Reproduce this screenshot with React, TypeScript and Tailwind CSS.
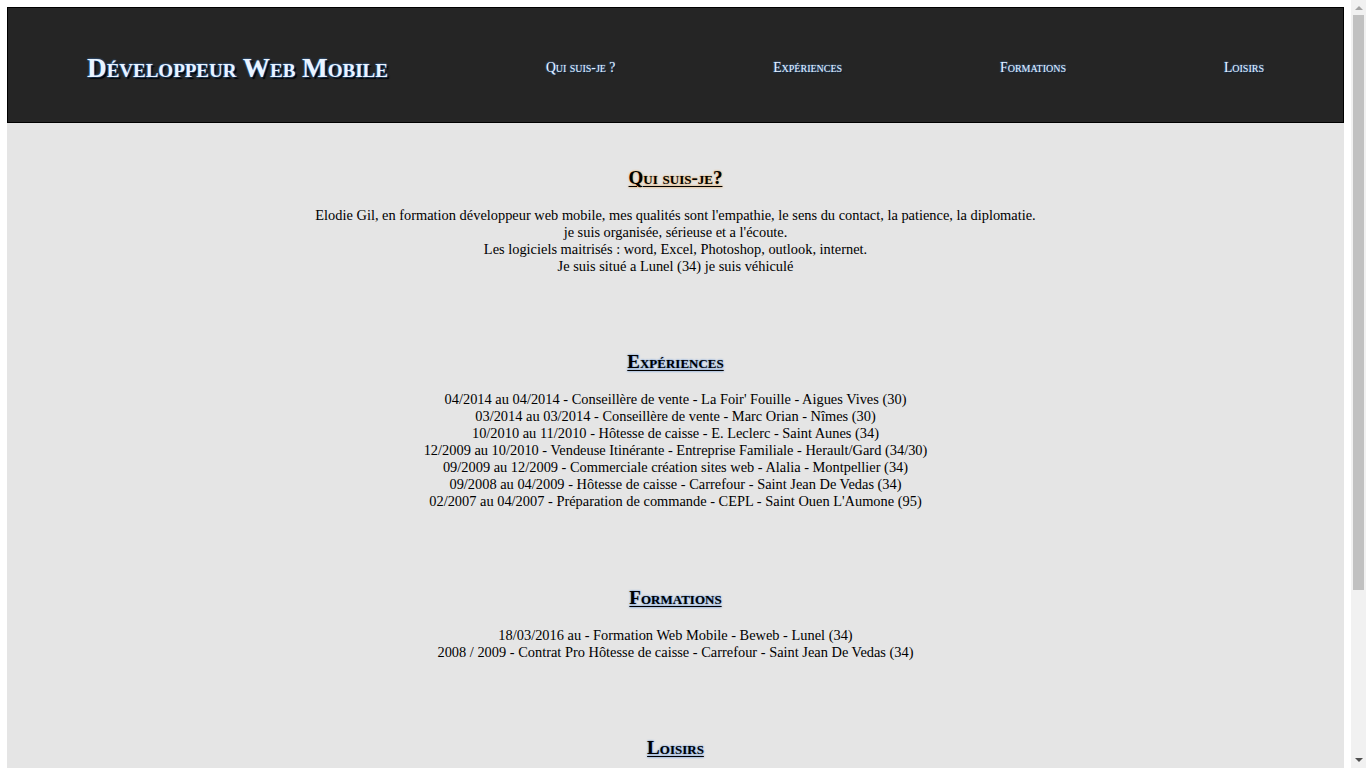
const navItems = ['Qui suis-je ?', 'Expériences', 'Formations', 'Loisirs'];

const experiences = [
  "04/2014 au 04/2014 - Conseillère de vente - La Foir' Fouille - Aigues Vives (30)",
  '03/2014 au 03/2014 - Conseillère de vente - Marc Orian - Nîmes (30)',
  '10/2010 au 11/2010 - Hôtesse de caisse - E. Leclerc - Saint Aunes (34)',
  '12/2009 au 10/2010 - Vendeuse Itinérante - Entreprise Familiale - Herault/Gard (34/30)',
  '09/2009 au 12/2009 - Commerciale création sites web - Alalia - Montpellier (34)',
  '09/2008 au 04/2009 - Hôtesse de caisse - Carrefour - Saint Jean De Vedas (34)',
  "02/2007 au 04/2007 - Préparation de commande - CEPL - Saint Ouen L'Aumone (95)",
];

const formations = [
  '18/03/2016 au - Formation Web Mobile - Beweb - Lunel (34)',
  '2008 / 2009 - Contrat Pro Hôtesse de caisse - Carrefour - Saint Jean De Vedas (34)',
];

const Section = ({
  title,
  lines,
  glow,
  className = 'pb-[76px]',
}: {
  title: string;
  lines: string[];
  glow: string;
  className?: string;
}) => (
  <section className={`text-center ${className}`}>
    <h2
      className={`mb-[18px] text-[19px] leading-[22px] font-bold text-black underline decoration-1 underline-offset-2 [font-variant:small-caps] ${glow}`}
    >
      {title}
    </h2>
    <p className="text-[14.4px] leading-[17px] text-black">
      {lines.map((line) => (
        <span key={line} className="block">
          {line}
        </span>
      ))}
    </p>
  </section>
);

// fake browser scrollbar, the reference page is taller than the window
const Scrollbar = () => (
  <aside className="fixed top-0 right-0 flex h-screen w-[15px] flex-col items-center bg-[#f1f1f1]">
    <div className="flex h-[15px] items-center justify-center">
      <svg width="8" height="5" viewBox="0 0 8 5">
        <path d="M0 5 L4 1 L8 5 Z" fill="#a3a3a3" />
      </svg>
    </div>
    <div className="h-[575px] w-[11px] bg-[#c1c1c1]" />
    <div className="flex-1" />
    <div className="flex h-[15px] items-center justify-center">
      <svg width="8" height="5" viewBox="0 0 8 5">
        <path d="M0 0 L8 0 L4 4 Z" fill="#505050" />
      </svg>
    </div>
  </aside>
);

export default function App() {
  return (
    <div className="min-h-screen bg-white pt-[7px] pr-[22px] pl-[7px] font-['Liberation_Serif',serif]">
      <header className="flex h-[116px] items-center justify-between border border-black bg-[#252525] px-[79px]">
        <h1 className="mt-[7px] text-[27.2px] font-bold text-[#eaf4ff] [font-variant:small-caps] [text-shadow:0_0_2px_#3f95ff,2px_2px_1px_#000]">
          Développeur Web Mobile
        </h1>
        {navItems.map((item) => (
          <a
            key={item}
            href="#"
            className="mt-[7px] text-[13.6px] text-[#e8f2ff] [font-variant:small-caps] [text-shadow:0_0_2px_#4a9dff,1px_1px_1px_#000]"
          >
            {item}
          </a>
        ))}
      </header>
      <main className="bg-[#e5e5e5] pt-[44px] pb-[60px]">
        <Section
          title="Qui suis-je?"
          glow="[text-shadow:0_0_2px_#e08a1e]"
          lines={[
            "Elodie Gil, en formation développeur web mobile, mes qualités sont l'empathie, le sens du contact, la patience, la diplomatie.",
            "je suis organisée, sérieuse et a l'écoute.",
            'Les logiciels maitrisés : word, Excel, Photoshop, outlook, internet.',
            'Je suis situé a Lunel (34) je suis véhiculé',
          ]}
        />
        <Section
          title="Expériences"
          glow="[text-shadow:0_0_2px_#2a6fd0]"
          lines={experiences}
          className="pb-[77px]"
        />
        <Section
          title="Formations"
          glow="[text-shadow:0_0_2px_#2a6fd0]"
          lines={formations}
        />
        <Section
          title="Loisirs"
          glow="[text-shadow:0_0_2px_#2a6fd0]"
          lines={['Lecture, cinéma, musique', 'Randonnée, voyages']}
        />
      </main>
      <Scrollbar />
    </div>
  );
}
